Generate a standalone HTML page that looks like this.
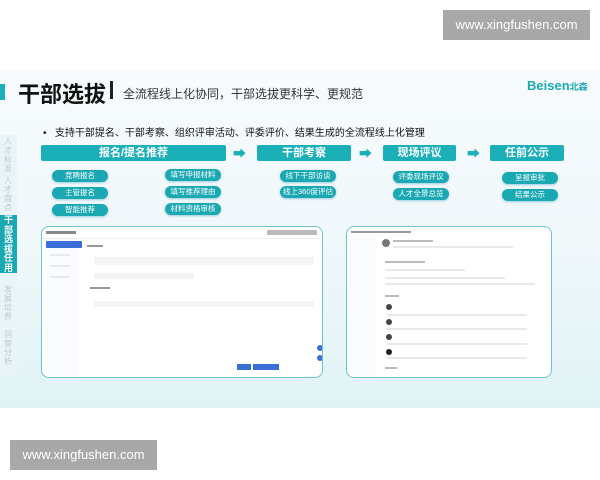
<!DOCTYPE html>
<html><head><meta charset="utf-8"><style>
*{margin:0;padding:0;box-sizing:border-box}
body{width:600px;height:480px;background:#fff;position:relative;overflow:hidden;font-family:"Liberation Sans","Noto Sans CJK SC",sans-serif}
.a{position:absolute}
.slide{left:0;top:70px;width:600px;height:338px;background:linear-gradient(180deg,#f7fbfd 0%,#eef7fa 60%,#dff3f5 100%)}
.wm{background:#a8a8a8;color:#fff;font-size:13px;text-align:center;line-height:30px}
.hd{background:#1bb0b8;color:#fff;font-weight:bold;font-size:11px;text-align:center;line-height:16px;border-radius:2px}
.pill{background:#1aa9b3;color:#fff;font-size:7.5px;text-align:center;line-height:12px;border-radius:6px;width:56px;height:12px;box-shadow:0 1px 2px #9cd}
.arr{color:#1bb0b8;font-size:13px;font-weight:bold}
.shot{background:#fff;border:1.5px solid #6cc6cc;border-radius:8px;overflow:hidden}
.ln{background:#e6e9ee;height:2px}
</style></head><body>
<div class="a wm" style="left:443px;top:10px;width:147px;height:30px">www.xingfushen.com</div>
<div class="a slide"></div>
<div class="a" style="left:0;top:84px;width:5px;height:16px;background:#1bb0b8"></div>
<div class="a" style="left:18px;top:77px;font-size:22px;font-weight:bold;color:#111">干部选拔</div>
<div class="a" style="left:110px;top:81px;width:3px;height:18px;background:#222"></div>
<div class="a" style="left:123px;top:85px;font-size:12px;color:#333">全流程线上化协同，干部选拔更科学、更规范</div>
<div class="a" style="left:527px;top:78px;font-size:13px;font-weight:bold;color:#1aa9b3">Beisen<span style="font-size:9px">北森</span></div>
<div class="a" style="left:0;top:135px;width:17px;height:240px;background:#eaf3f6"></div>
<div class="a" style="left:0;top:215px;width:17px;height:58px;background:#1aa9b3"></div>
<div class="a" style="left:4px;top:137px;width:10px;font-size:8px;line-height:9px;color:#b8cbd0">人才标准</div>
<div class="a" style="left:4px;top:176px;width:10px;font-size:8px;line-height:9px;color:#b8cbd0">人才盘点</div>
<div class="a" style="left:4px;top:216px;width:10px;font-size:9px;line-height:9.5px;color:#fff;font-weight:bold">干部选拔任用</div>
<div class="a" style="left:4px;top:285px;width:10px;font-size:8px;line-height:9px;color:#b8cbd0">发展培养</div>
<div class="a" style="left:4px;top:330px;width:10px;font-size:8px;line-height:9px;color:#b8cbd0">洞察分析</div>
<div class="a" style="left:43px;top:124px;font-size:10px;color:#111">•&nbsp;&nbsp;&nbsp;支持干部提名、干部考察、组织评审活动、评委评价、结果生成的全流程线上化管理</div>
<div class="a hd" style="left:41px;top:145px;width:185px">报名/提名推荐</div>
<div class="a arr" style="left:233px;top:143px">➡</div>
<div class="a hd" style="left:257px;top:145px;width:94px">干部考察</div>
<div class="a arr" style="left:359px;top:143px">➡</div>
<div class="a hd" style="left:383px;top:145px;width:73px">现场评议</div>
<div class="a arr" style="left:467px;top:143px">➡</div>
<div class="a hd" style="left:490px;top:145px;width:74px">任前公示</div>
<div class="a pill" style="left:52px;top:170px">竞聘报名</div>
<div class="a pill" style="left:52px;top:187px">主管提名</div>
<div class="a pill" style="left:52px;top:204px">智能推荐</div>
<div class="a pill" style="left:165px;top:169px">填写申报材料</div>
<div class="a pill" style="left:165px;top:186px">填写推荐理由</div>
<div class="a pill" style="left:165px;top:203px">材料资格审核</div>
<div class="a pill" style="left:280px;top:170px">线下干部访谈</div>
<div class="a pill" style="left:280px;top:186px">线上360度评估</div>
<div class="a pill" style="left:393px;top:171px">评委现场评议</div>
<div class="a pill" style="left:393px;top:188px">人才全景总览</div>
<div class="a pill" style="left:502px;top:172px">呈报审批</div>
<div class="a pill" style="left:502px;top:189px">结果公示</div>
<div class="a shot" style="left:41px;top:226px;width:282px;height:152px">
 <div class="a" style="left:0;top:0;width:282px;height:12px;border-bottom:1px solid #eee"></div>
 <div class="a" style="left:4px;top:4px;width:30px;height:3px;background:#888"></div>
 <div class="a" style="left:225px;top:3px;width:50px;height:5px;background:#bbb"></div>
 <div class="a" style="left:3px;top:12px;width:34px;height:140px;background:#fafbfc"></div>
 <div class="a" style="left:4px;top:14px;width:36px;height:7px;background:#3b6fd8;border-radius:1px"></div>
 <div class="a ln" style="left:8px;top:27px;width:20px"></div>
 <div class="a ln" style="left:8px;top:38px;width:20px"></div>
 <div class="a ln" style="left:8px;top:49px;width:20px"></div>
 <div class="a ln" style="left:45px;top:18px;width:16px;background:#999"></div>
 <div class="a ln" style="left:52px;top:30px;width:220px;height:8px;background:#f3f4f6"></div>
 <div class="a ln" style="left:52px;top:46px;width:100px;height:6px;background:#f3f4f6"></div>
 <div class="a ln" style="left:48px;top:60px;width:20px;background:#999"></div>
 <div class="a ln" style="left:52px;top:74px;width:220px;height:6px;background:#f3f4f6"></div>
 <div class="a" style="left:187px;top:177px;"></div>
 <div class="a" style="left:195px;top:137px;width:14px;height:6px;background:#3b6fd8"></div>
 <div class="a" style="left:211px;top:137px;width:26px;height:6px;background:#3b6fd8"></div>
 <div class="a" style="left:275px;top:118px;width:6px;height:6px;border-radius:3px;background:#3b6fd8"></div>
 <div class="a" style="left:275px;top:128px;width:6px;height:6px;border-radius:3px;background:#3b6fd8"></div>
</div>
<div class="a shot" style="left:346px;top:226px;width:206px;height:152px">
 <div class="a ln" style="left:4px;top:4px;width:60px;background:#999"></div>
 <div class="a" style="left:3px;top:10px;width:26px;height:140px;background:#fafbfc"></div>
 <div class="a" style="left:35px;top:12px;width:8px;height:8px;border-radius:4px;background:#777"></div>
 <div class="a ln" style="left:46px;top:13px;width:40px;background:#bbb"></div>
 <div class="a ln" style="left:46px;top:19px;width:120px"></div>
 <div class="a ln" style="left:38px;top:34px;width:40px;background:#bbb"></div>
 <div class="a ln" style="left:38px;top:42px;width:80px"></div>
 <div class="a ln" style="left:38px;top:50px;width:120px"></div>
 <div class="a ln" style="left:38px;top:56px;width:150px"></div>
 <div class="a ln" style="left:38px;top:68px;width:14px;background:#bbb"></div>
 <div class="a" style="left:39px;top:77px;width:6px;height:6px;border-radius:3px;background:#444"></div>
 <div class="a ln" style="left:40px;top:87px;width:140px"></div>
 <div class="a" style="left:39px;top:92px;width:6px;height:6px;border-radius:3px;background:#444"></div>
 <div class="a ln" style="left:40px;top:101px;width:140px"></div>
 <div class="a" style="left:39px;top:107px;width:6px;height:6px;border-radius:3px;background:#444"></div>
 <div class="a ln" style="left:40px;top:116px;width:140px"></div>
 <div class="a" style="left:39px;top:122px;width:6px;height:6px;border-radius:3px;background:#222"></div>
 <div class="a ln" style="left:40px;top:130px;width:140px"></div>
 <div class="a ln" style="left:38px;top:140px;width:12px;background:#bbb"></div>
</div>
<div class="a wm" style="left:10px;top:440px;width:147px;height:30px">www.xingfushen.com</div>
</body></html>
